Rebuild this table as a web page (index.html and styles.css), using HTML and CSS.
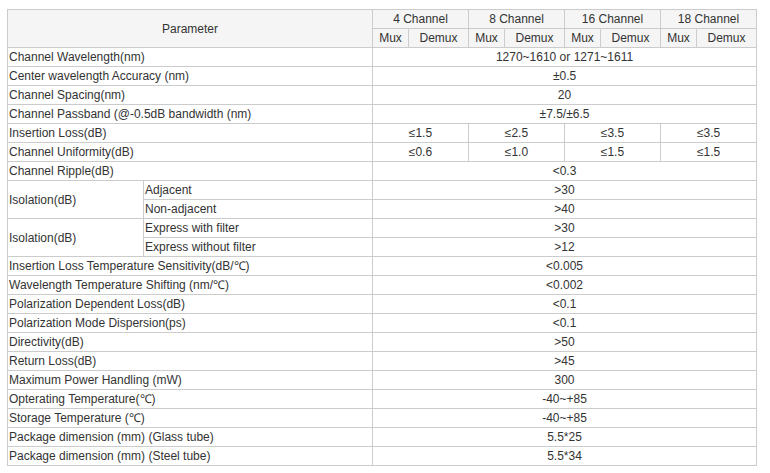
FILE: index.html
```html
<!DOCTYPE html>
<html>
<head>
<meta charset="utf-8">
<link rel="stylesheet" href="styles.css">
</head>
<body>
<table class="spec">
  <colgroup>
    <col class="c-a"><col class="c-b">
    <col class="c-m"><col class="c-d">
    <col class="c-m"><col class="c-d">
    <col class="c-m"><col class="c-d">
    <col class="c-m"><col class="c-d">
  </colgroup>
  <thead>
    <tr>
      <th rowspan="2" colspan="2" class="param-head">Parameter</th>
      <th colspan="2">4 Channel</th>
      <th colspan="2">8 Channel</th>
      <th colspan="2">16 Channel</th>
      <th colspan="2">18 Channel</th>
    </tr>
    <tr>
      <th>Mux</th><th>Demux</th>
      <th>Mux</th><th>Demux</th>
      <th>Mux</th><th>Demux</th>
      <th>Mux</th><th>Demux</th>
    </tr>
  </thead>
  <tbody>
    <tr><td colspan="2" class="lbl">Channel Wavelength(nm)</td><td colspan="8">1270~1610 or 1271~1611</td></tr>
    <tr><td colspan="2" class="lbl">Center wavelength Accuracy (nm)</td><td colspan="8">±0.5</td></tr>
    <tr><td colspan="2" class="lbl">Channel Spacing(nm)</td><td colspan="8">20</td></tr>
    <tr><td colspan="2" class="lbl">Channel Passband (@-0.5dB bandwidth (nm)</td><td colspan="8">±7.5/±6.5</td></tr>
    <tr><td colspan="2" class="lbl">Insertion Loss(dB)</td><td colspan="2">≤1.5</td><td colspan="2">≤2.5</td><td colspan="2">≤3.5</td><td colspan="2">≤3.5</td></tr>
    <tr><td colspan="2" class="lbl">Channel Uniformity(dB)</td><td colspan="2">≤0.6</td><td colspan="2">≤1.0</td><td colspan="2">≤1.5</td><td colspan="2">≤1.5</td></tr>
    <tr><td colspan="2" class="lbl">Channel Ripple(dB)</td><td colspan="8">&lt;0.3</td></tr>
    <tr><td rowspan="2" class="lbl">Isolation(dB)</td><td class="lbl">Adjacent</td><td colspan="8">&gt;30</td></tr>
    <tr><td class="lbl">Non-adjacent</td><td colspan="8">&gt;40</td></tr>
    <tr><td rowspan="2" class="lbl">Isolation(dB)</td><td class="lbl">Express with filter</td><td colspan="8">&gt;30</td></tr>
    <tr><td class="lbl">Express without filter</td><td colspan="8">&gt;12</td></tr>
    <tr><td colspan="2" class="lbl">Insertion Loss Temperature Sensitivity(dB/℃)</td><td colspan="8">&lt;0.005</td></tr>
    <tr><td colspan="2" class="lbl">Wavelength Temperature Shifting (nm/℃)</td><td colspan="8">&lt;0.002</td></tr>
    <tr><td colspan="2" class="lbl">Polarization Dependent Loss(dB)</td><td colspan="8">&lt;0.1</td></tr>
    <tr><td colspan="2" class="lbl">Polarization Mode Dispersion(ps)</td><td colspan="8">&lt;0.1</td></tr>
    <tr><td colspan="2" class="lbl">Directivity(dB)</td><td colspan="8">&gt;50</td></tr>
    <tr><td colspan="2" class="lbl">Return Loss(dB)</td><td colspan="8">&gt;45</td></tr>
    <tr><td colspan="2" class="lbl">Maximum Power Handling (mW)</td><td colspan="8">300</td></tr>
    <tr><td colspan="2" class="lbl">Opterating Temperature(℃)</td><td colspan="8">-40~+85</td></tr>
    <tr><td colspan="2" class="lbl">Storage Temperature (℃)</td><td colspan="8">-40~+85</td></tr>
    <tr><td colspan="2" class="lbl">Package dimension (mm) (Glass tube)</td><td colspan="8">5.5*25</td></tr>
    <tr><td colspan="2" class="lbl">Package dimension (mm) (Steel tube)</td><td colspan="8">5.5*34</td></tr>
  </tbody>
</table>
</body>
</html>
```
FILE: styles.css
```css
html, body {
  margin: 0;
  padding: 0;
  background: #ffffff;
}
body {
  padding: 9px 0 0 7px;
  font-family: "Liberation Sans", Arial, sans-serif;
  font-size: 12px;
  color: #333333;
}
.spec {
  border-collapse: collapse;
  table-layout: fixed;
  width: 749px;
}
.c-a { width: 136px; }
.c-b { width: 229px; }
.c-m { width: 36px; }
.c-d { width: 60px; }
.spec th,
.spec td {
  border: 1px solid #cccccc;
  padding: 0 1px;
  height: 18px;
  line-height: 18px;
  text-align: center;
  vertical-align: middle;
  white-space: nowrap;
  font-weight: normal;
}
.spec thead th {
  background: #f5f5f5;
}
.spec td.lbl {
  text-align: left;
  padding-left: 1px;
}
```
